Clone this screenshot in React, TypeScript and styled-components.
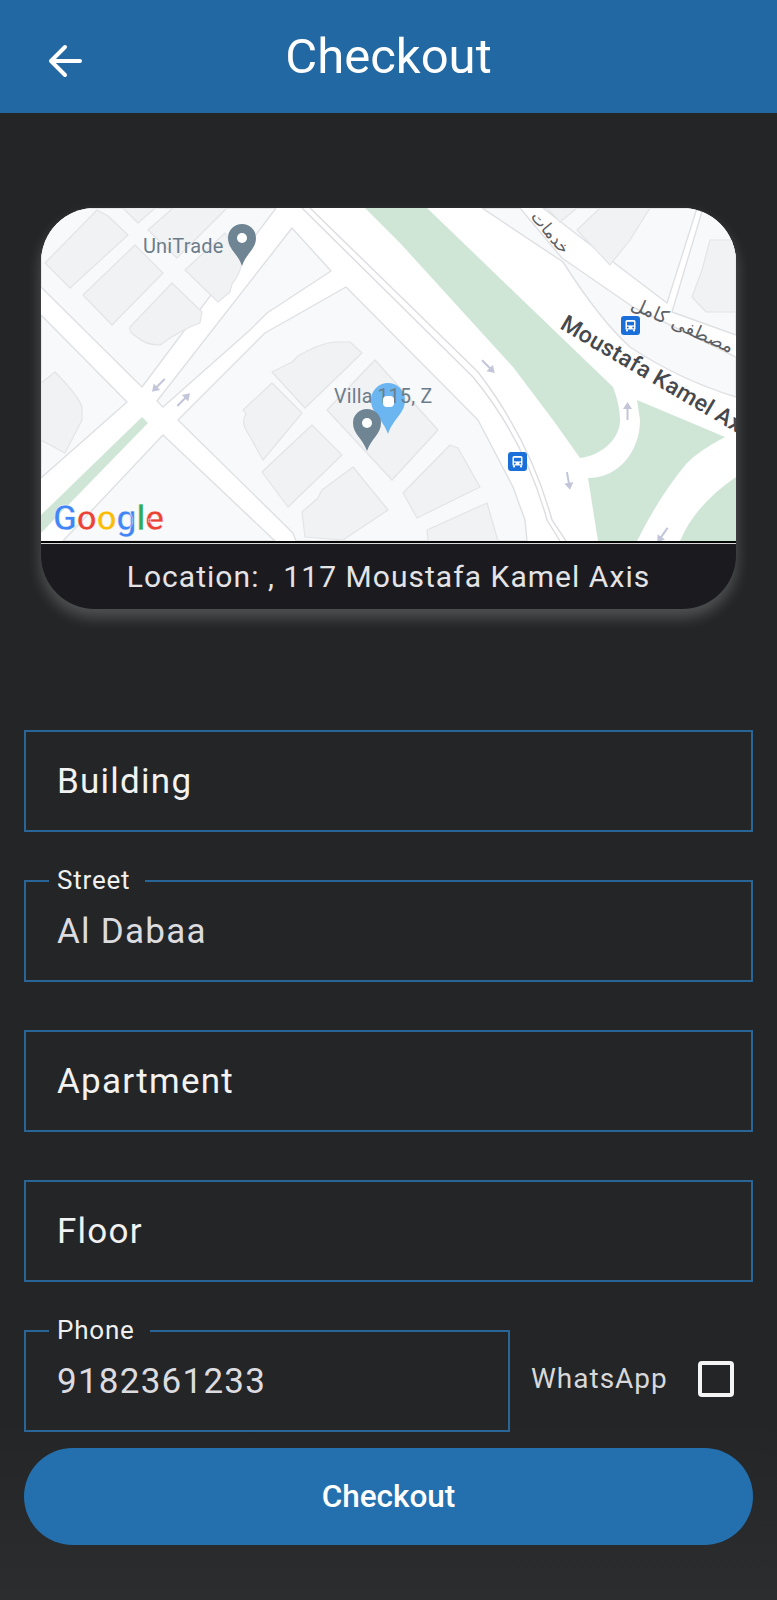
import React from "react";
import styled, { createGlobalStyle } from "styled-components";

const Global = createGlobalStyle`
  html, body { margin: 0; padding: 0; background: #232528; }
  * { box-sizing: border-box; }
  body { font-family: Roboto, "Liberation Sans", sans-serif; }
`;

const Page = styled.div`
  width: 777px;
  min-height: 1600px;
  display: flex;
  flex-direction: column;
  background: linear-gradient(#232527 0, #232527 1420px, #2b2d2e 1600px);
`;

const Header = styled.header`
  height: 113px;
  background: #2268a2;
  display: grid;
  grid-template-columns: 1fr auto 1fr;
  align-items: center;
  padding-left: 47px;
`;

const BackIcon = styled.svg`
  width: 36px;
  height: 36px;
  margin-top: 9px;
  color: #fff;
`;

const Title = styled.h1`
  margin: 0 47px 0 0;
  font-size: 49px;
  font-weight: 400;
  color: #fff;
  line-height: 56px;
`;

const Main = styled.main`
  display: flex;
  flex-direction: column;
  padding: 95px 24px 0;
`;

const MapCard = styled.section`
  margin: 0 17px;
  height: 401px;
  border-radius: 54px;
  overflow: hidden;
  display: flex;
  flex-direction: column;
  background: #1b1b1f;
  box-shadow: 0 8px 14px 1px rgba(255, 255, 255, 0.2);
`;

const MapSvg = styled.svg`
  display: block;
  width: 695px;
  height: 333px;
  flex: none;
`;

const Caption = styled.div`
  flex: 1;
  border-top: 2px solid #050505;
  display: flex;
  flex-direction: column;
  &::before {
    content: "";
    height: 1px;
    background: #d8d8d8;
  }
`;

const CaptionText = styled.div`
  flex: 1;
  display: flex;
  align-items: center;
  justify-content: center;
  font-size: 30px;
  letter-spacing: 1.04px;
  color: #e4e4e6;
`;

const Fields = styled.div`
  margin-top: 121px;
  display: flex;
  flex-direction: column;
  gap: 48px;
`;

const FieldBox = styled.div`
  position: relative;
  height: 102px;
  border: 2px solid #2a6598;
  display: flex;
  align-items: center;
  padding-left: 31px;
`;

const FloatLabel = styled.label`
  position: absolute;
  left: 23px;
  top: -17px;
  padding: 0 15px 0 8px;
  background: #232527;
  font-size: 26px;
  line-height: 30px;
  letter-spacing: 0.8px;
  color: #f0f0f0;
`;

const FieldInput = styled.input`
  width: 100%;
  background: transparent;
  border: 0;
  outline: 0;
  padding: 0;
  font-family: Roboto, "Liberation Sans", sans-serif;
  font-size: 35px;
  letter-spacing: 1.25px;
  color: #dcdce0;
  &::placeholder {
    color: #f2f2f2;
    opacity: 1;
  }
`;

const PhoneRow = styled.div`
  margin-top: 48px;
  display: grid;
  grid-template-columns: 486px 1fr;
  align-items: center;
`;

const WhatsApp = styled.div`
  display: flex;
  align-items: center;
  padding-left: 21px;
  padding-bottom: 5px;
`;

const WhatsAppText = styled.span`
  font-size: 28px;
  letter-spacing: 1px;
  color: #d8d8da;
`;

const CheckBox = styled.span`
  width: 36px;
  height: 36px;
  margin-left: 30px;
  border: 4px solid #f4f4f4;
  border-radius: 4px;
`;

const SubmitButton = styled.button`
  margin-top: 16px;
  height: 97px;
  border: 0;
  border-radius: 49px;
  background: #2470ae;
  color: #fff;
  font-family: Roboto, "Liberation Sans", sans-serif;
  font-size: 31.5px;
  font-weight: 500;
`;

const arrows: [number, number, number][] = [
  [158, 385, 225],
  [184, 400, 45],
  [488, 367, 135],
  [628, 411, 0],
  [568, 481, 170],
  [662, 535, 215],
];

const whiteBlocks = [
  "41,208 276,208 142,387 41,287",
  "41,315 127,402 41,478",
  "163,435 275,541 63,541",
  "292,228 331,271 267,313 250,330 163,407 157,401",
  "346,287 478,420 513,487 525,520 527,541 296,541 293,533 178,420 265,333",
  "543,208 697,208 667,303 575,233",
  "703,208 736,208 736,335 672,312",
];

const buildings = [
  "M45 263L97 210L108 216L128 235L70 288Z",
  "M83 295L135 245L163 273L112 325Z",
  "M123 208H155L138 223Z",
  "M148 230L173 208H227L177 258Z",
  "M185 270L225 233L242 262Q240 275 232 284L230 292L218 302Z",
  "M130 327L172 283L202 312L200 323Q180 330 160 345Q145 345 137 337Q128 332 130 327Z",
  "M41 383L55 372Q78 395 82 407V420L65 453L41 440Z",
  "M272 372L292 362L298 356Q320 343 335 342H350L362 353L305 408Z",
  "M272 383L302 413L263 460L245 428Q242 420 246 414L243 410Z",
  "M262 472L312 425L342 455L288 507Z",
  "M302 512L318 498L322 490L353 467L388 510L343 540L305 537Z",
  "M327 410L375 360L438 430L392 480Z",
  "M403 493L450 445L458 448L480 487L417 518Z",
  "M427 530L487 503L498 541H428Z",
  "M547 208H577L560 222Z",
  "M577 230L600 208H650L630 240L610 265Z",
  "M710 240H736V312H706L692 297L702 270Z",
];

const PinShape = ({ x, y, r, color }: { x: number; y: number; r: number; color: string }) => (
  <path
    d={`M${x - r} ${y}a${r} ${r} 0 1 1 ${2 * r} 0c0 ${r * 0.8} ${-r * 0.7} ${r * 1.1} ${-r} ${r * 2}c${-r * 0.3} ${-r * 0.9} ${-r} ${-r * 1.2} ${-r} ${-r * 2}z`}
    fill={color}
  />
);

const Bus = ({ x, y }: { x: number; y: number }) => (
  <g transform={`translate(${x} ${y})`}>
    <rect width="19" height="19" rx="3" fill="#1a6fd8" />
    <path d="M4.5 5.5q0-1.5 1.5-1.5h7q1.5 0 1.5 1.5v8h-10z" fill="#fff" />
    <rect x="6" y="5.8" width="7" height="3.6" fill="#1a6fd8" />
    <circle cx="6.8" cy="11.5" r="0.9" fill="#1a6fd8" />
    <circle cx="12.2" cy="11.5" r="0.9" fill="#1a6fd8" />
    <rect x="5" y="13.5" width="2" height="1.8" fill="#fff" />
    <rect x="12" y="13.5" width="2" height="1.8" fill="#fff" />
  </g>
);

const CityMap = () => (
  <MapSvg viewBox="41 208 695 333">
    <rect x="41" y="208" width="695" height="333" fill="#ffffff" />
    <g fill="#cfe6d6">
      <path d="M365 208H427L613 387Q620 405 620 420C620 440 600 456 580 458L553 420L513 367L400 243Z" />
      <path d="M637 400L725 437Q700 450 687 463Q660 495 637 541H598L588 478C620 478 640 450 640 420Z" />
      <path d="M736 477L736 541H680Q695 505 736 477Z" />
      <path d="M142 417L148 423L41 533V515Z" />
    </g>
    <g fill="#f8f9fb" stroke="#dfe0e3" strokeWidth="1.4" strokeLinejoin="round">
      {whiteBlocks.map((p) => (
        <polygon key={p} points={p} />
      ))}
      <path d="M482 208L563 262Q600 320 630 347Q680 380 736 397V357L633 307L562 258L520 208Z" />
    </g>
    <g fill="#f1f2f4" stroke="#e3e4e7" strokeWidth="1.2" strokeLinejoin="round">
      {buildings.map((d) => (
        <path key={d} d={d} />
      ))}
    </g>
    <g fill="none" stroke="#dcdde1" strokeWidth="1.4">
      <path d="M302 208L473 377Q525 440 547 520L560 541" />
      <path d="M310 208L478 372Q530 440 552 520L566 541" />
    </g>
    {arrows.map(([x, y, a]) => (
      <g key={`${x}-${y}`} transform={`rotate(${a} ${x} ${y})`} fill="#c3c5d9">
        <path d={`M${x - 1.5} ${y + 9}v-11h-3.5l4.5 -7 4.5 7h-3.5v11z`} />
      </g>
    ))}
    <text x="143" y="252.5" fontSize="20" fill="#6c7d8a" letterSpacing="0.15">UniTrade</text>
    <PinShape x={388} y={400} r={17} color="#6bb5f0" />
    <text x="334" y="403" fontSize="19.5" fill="#6c7d8a" letterSpacing="0.25">Villa 115, Z</text>
    <rect x="383" y="396" width="11" height="11" rx="4" fill="#fff" />
    <PinShape x={242} y={238} r={14} color="#6f8593" />
    <circle cx={242} cy={238} r={5} fill="#fff" />
    <PinShape x={367} y={423} r={14} color="#6f8593" />
    <circle cx={367} cy={423} r={5} fill="#fff" />
    <Bus x={621} y={316} />
    <Bus x={508} y={452} />
    <text x="559" y="328" fontSize="23" fontWeight="500" fill="#45484c" letterSpacing="0.3" transform="rotate(30.5 559 328)">Moustafa Kamel Axis</text>
    <text x="680" y="331" fontSize="18.5" fill="#5d6064" textAnchor="middle" fontFamily="'DejaVu Sans', sans-serif" transform="rotate(24 680 331)">مصطفى كامل</text>
    <text x="546" y="236" fontSize="17" fill="#5d6064" textAnchor="middle" fontFamily="'DejaVu Sans', sans-serif" transform="rotate(50 546 236)">خدمات</text>
    <text x="53" y="530" fontSize="35" fontWeight="500" stroke="#fff" strokeWidth="0.4">
      <tspan fill="#4285f4">G</tspan>
      <tspan fill="#ea4335">o</tspan>
      <tspan fill="#fbbc05">o</tspan>
      <tspan fill="#4285f4">g</tspan>
      <tspan fill="#34a853">l</tspan>
      <tspan fill="#ea4335">e</tspan>
    </text>
  </MapSvg>
);

export default function App() {
  return (
    <Page>
      <Global />
      <Header>
        <BackIcon viewBox="0 0 36 36" fill="none" stroke="currentColor" strokeWidth="4" strokeLinecap="round" strokeLinejoin="round">
          <path d="M4 18H33M18 4L4 18L18 32" />
        </BackIcon>
        <Title>Checkout</Title>
        <span />
      </Header>
      <Main>
        <MapCard>
          <CityMap />
          <Caption>
            <CaptionText>Location: , 117 Moustafa Kamel Axis</CaptionText>
          </Caption>
        </MapCard>
        <Fields>
          <FieldBox>
            <FieldInput placeholder="Building" readOnly />
          </FieldBox>
          <FieldBox>
            <FloatLabel>Street</FloatLabel>
            <FieldInput defaultValue="Al Dabaa" readOnly />
          </FieldBox>
          <FieldBox>
            <FieldInput placeholder="Apartment" readOnly />
          </FieldBox>
          <FieldBox>
            <FieldInput placeholder="Floor" readOnly />
          </FieldBox>
        </Fields>
        <PhoneRow>
          <FieldBox>
            <FloatLabel>Phone</FloatLabel>
            <FieldInput defaultValue="9182361233" readOnly />
          </FieldBox>
          <WhatsApp>
            <WhatsAppText>WhatsApp</WhatsAppText>
            <CheckBox />
          </WhatsApp>
        </PhoneRow>
        <SubmitButton>Checkout</SubmitButton>
      </Main>
    </Page>
  );
}
